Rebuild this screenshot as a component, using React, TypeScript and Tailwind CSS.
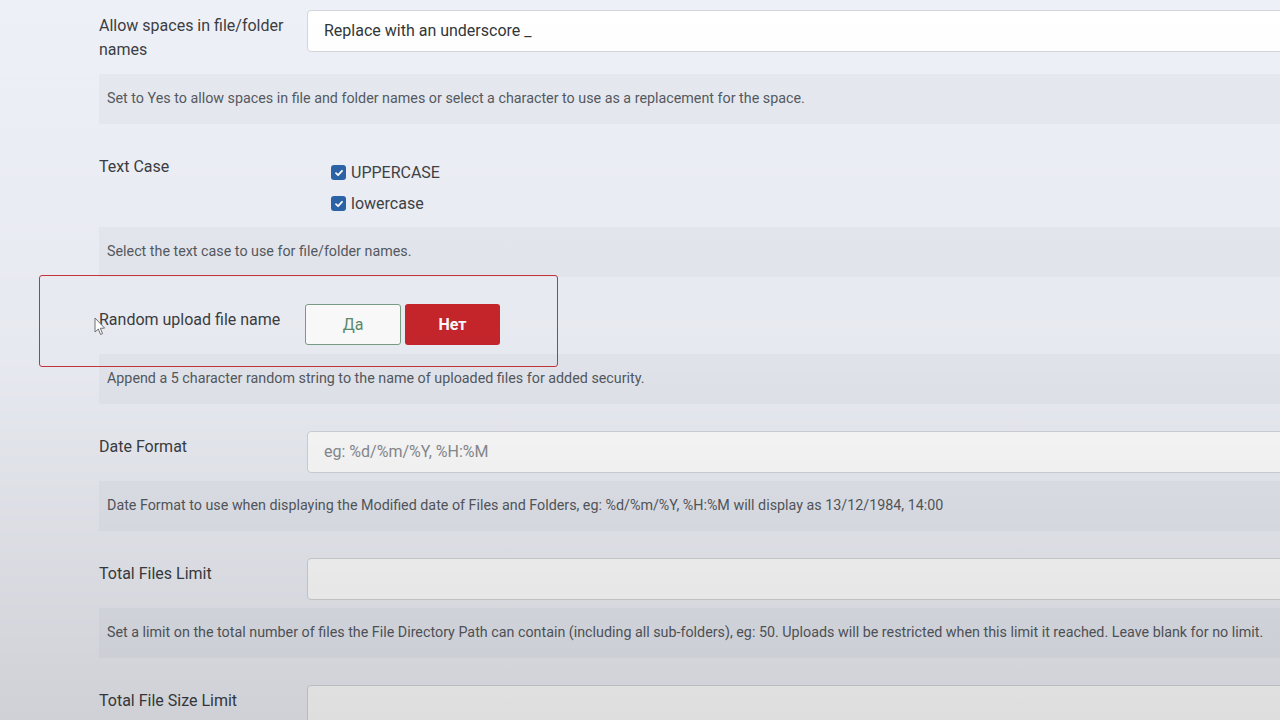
import React from "react"

const font = { fontFamily: "Roboto, 'Noto Sans', Arial, sans-serif" }

function Desc({ children }: { children: React.ReactNode }) {
  return (
    <div className="mt-2 h-[50px] flex items-center pl-2 bg-[#e4e6ee]/70 text-[14.3px] text-[#555a60] whitespace-nowrap">
      {children}
    </div>
  )
}

function Label({ children }: { children: React.ReactNode }) {
  return <div className="w-[208px] shrink-0 py-1 pr-4 text-[16px] leading-6 text-[#3b3e42]">{children}</div>
}

function TextInput({ value, placeholder }: { value?: string; placeholder?: string }) {
  return (
    <div className="flex-1 h-[42px] flex items-center px-4 bg-white border border-[#d3d5da] rounded-l-[4px] text-[16px]">
      {value ? <span className="text-[#333639]">{value}</span> : <span className="text-[#8a8d92]">{placeholder}</span>}
    </div>
  )
}

function Check({ label }: { label: string }) {
  return (
    <div className="h-[31px] flex items-center gap-[5px]">
      <span className="w-[15px] h-[15px] rounded-[3px] bg-[#2c63a8] flex items-center justify-center">
        <svg width="10" height="10" viewBox="0 0 10 10">
          <path d="M2 5.2 L4.1 7.2 L8 2.8" fill="none" stroke="white" strokeWidth="1.8" strokeLinecap="round" strokeLinejoin="round" />
        </svg>
      </span>
      <span className="text-[16px] text-[#3f4246]">{label}</span>
    </div>
  )
}

export default function App() {
  return (
    <div className="relative w-[1280px] h-[720px] overflow-hidden bg-[#eef0f7]" style={font}>
      <div className="w-[1220px] ml-[99px] pt-[10px] flex flex-col gap-[27px]">
        {/* allow spaces */}
        <section>
          <div className="flex items-start">
            <Label>Allow spaces in file/folder names</Label>
            <TextInput value="Replace with an underscore _" />
          </div>
          <Desc>Set to Yes to allow spaces in file and folder names or select a character to use as a replacement for the space.</Desc>
        </section>

        {/* text case */}
        <section>
          <div className="flex items-start">
            <Label>Text Case</Label>
            <div className="pl-6 pt-[6px]">
              <Check label="UPPERCASE" />
              <Check label="lowercase" />
            </div>
          </div>
          <Desc>Select the text case to use for file/folder names.</Desc>
        </section>

        {/* random name */}
        <section>
          <div className="flex items-start h-[42px]">
            <Label>Random upload file name</Label>
            <div className="flex gap-1 -ml-[2px]">
              <button className="w-[96px] h-[41px] bg-white border border-[#7a9f86] rounded-[3px] text-[16px] text-[#5e8c6c]">Да</button>
              <button className="w-[95px] h-[41px] bg-[#c8262c] rounded-[3px] text-[16px] font-bold text-white">Нет</button>
            </div>
          </div>
          <Desc>Append a 5 character random string to the name of uploaded files for added security.</Desc>
        </section>

        {/* date format */}
        <section>
          <div className="flex items-start">
            <Label>Date Format</Label>
            <TextInput placeholder="eg: %d/%m/%Y, %H:%M" />
          </div>
          <Desc>Date Format to use when displaying the Modified date of Files and Folders, eg: %d/%m/%Y, %H:%M will display as 13/12/1984, 14:00</Desc>
        </section>

        {/* files limit */}
        <section>
          <div className="flex items-start">
            <Label>Total Files Limit</Label>
            <TextInput />
          </div>
          <Desc>Set a limit on the total number of files the File Directory Path can contain (including all sub-folders), eg: 50. Uploads will be restricted when this limit it reached. Leave blank for no limit.</Desc>
        </section>

        {/* size limit */}
        <section>
          <div className="flex items-start">
            <Label>Total File Size Limit</Label>
            <TextInput />
          </div>
        </section>
      </div>

      {/* screen vignette */}
      <div className="pointer-events-none absolute inset-0 bg-gradient-to-b from-transparent via-black/[0.03] to-black/[0.13]" />

      {/* highlight frame */}
      <div className="pointer-events-none absolute left-[39px] top-[275px] w-[519px] h-[92px] border border-[#c0343a] rounded-[3px]" />

      {/* mouse pointer */}
      <svg className="pointer-events-none absolute left-[94px] top-[317px]" width="12" height="20" viewBox="0 0 12 20">
        <path d="M1 1 L1 15 L4.3 12 L6.6 17.5 L8.6 16.6 L6.3 11.3 L10.6 11.1 Z" fill="white" stroke="#6b6e73" strokeWidth="1" strokeLinejoin="round" />
      </svg>
    </div>
  )
}
